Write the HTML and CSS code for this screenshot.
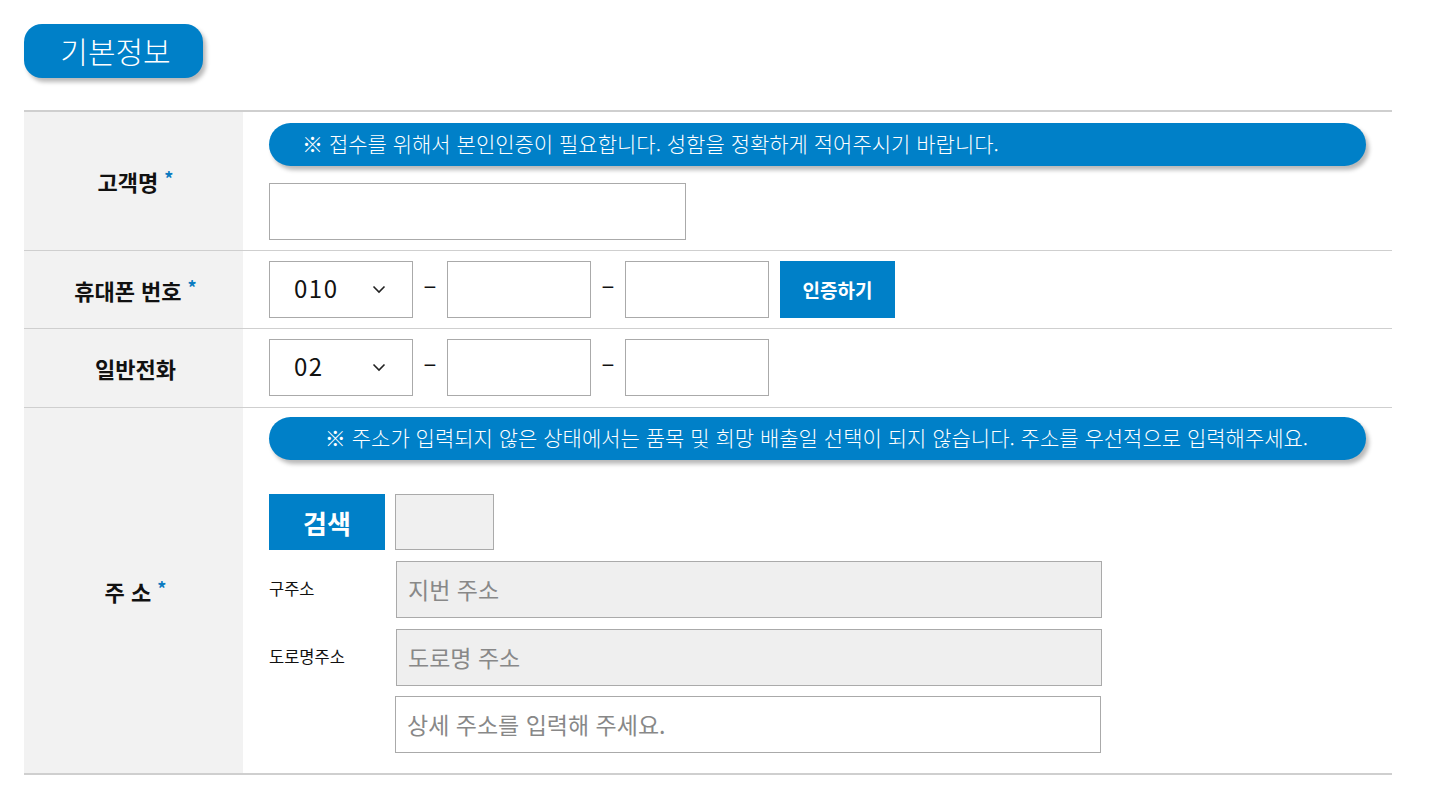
FILE: index.html
```html
<!DOCTYPE html>
<html lang="ko">
<head>
<meta charset="utf-8">
<title>기본정보</title>
<link rel="stylesheet" href="styles.css">
</head>
<body>
<div class="page">
  <h2 class="title">기본정보</h2>
  <div class="form">
    <div class="row row-name">
      <div class="label">고객명<span class="req">*</span></div>
      <div class="field">
        <div class="notice notice-left">※ 접수를 위해서 본인인증이 필요합니다. 성함을 정확하게 적어주시기 바랍니다.</div>
        <div class="input name-input"></div>
      </div>
    </div>
    <div class="row row-phone">
      <div class="label">휴대폰 번호<span class="req">*</span></div>
      <div class="field inline">
        <div class="select"><span>010</span><svg class="chev" width="14" height="9" viewBox="0 0 14 9"><path d="M1.5 1.5 L7 7 L12.5 1.5" fill="none" stroke="#222" stroke-width="1.6"/></svg></div>
        <span class="dash">–</span>
        <div class="input short"></div>
        <span class="dash">–</span>
        <div class="input short"></div>
        <button class="btn verify">인증하기</button>
      </div>
    </div>
    <div class="row row-phone row-tel">
      <div class="label">일반전화</div>
      <div class="field inline">
        <div class="select"><span>02</span><svg class="chev" width="14" height="9" viewBox="0 0 14 9"><path d="M1.5 1.5 L7 7 L12.5 1.5" fill="none" stroke="#222" stroke-width="1.6"/></svg></div>
        <span class="dash">–</span>
        <div class="input short"></div>
        <span class="dash">–</span>
        <div class="input short"></div>
      </div>
    </div>
    <div class="row row-addr">
      <div class="label">주 소<span class="req">*</span></div>
      <div class="field">
        <div class="notice notice-center">※ 주소가 입력되지 않은 상태에서는 품목 및 희망 배출일 선택이 되지 않습니다. 주소를 우선적으로 입력해주세요.</div>
        <div class="search-line">
          <button class="btn search">검색</button>
          <div class="zip"></div>
        </div>
        <div class="addr-line">
          <span class="addr-label">구주소</span>
          <div class="input addr gray">지번 주소</div>
        </div>
        <div class="addr-line">
          <span class="addr-label">도로명주소</span>
          <div class="input addr gray">도로명 주소</div>
        </div>
        <div class="addr-line detail">
          <span class="addr-label"></span>
          <div class="input addr">상세 주소를 입력해 주세요.</div>
        </div>
      </div>
    </div>
  </div>
</div>
</body>
</html>
```
FILE: styles.css
```css
* { box-sizing: border-box; }
html, body { margin: 0; padding: 0; background: #fff; }
body {
  font-family: "Noto Sans CJK KR", "Noto Sans", sans-serif;
  color: #111;
}
.page {
  padding: 24px 0 0 24px;
  width: 1392px;
}
.title {
  margin: 0;
  width: 179px;
  height: 54px;
  border-radius: 18px;
  background: #0080c8;
  color: #fff;
  font-size: 30px;
  font-weight: 300;
  line-height: 52px;
  text-align: center;
  padding-left: 4px;
  box-shadow: 3px 4px 4px rgba(0,0,0,0.28);
}
.form {
  margin-top: 32px;
  border-top: 2px solid #cfcfcf;
  border-bottom: 2px solid #cfcfcf;
}
.row {
  display: flex;
  border-top: 1px solid #cfcfcf;
}
.row:first-child { border-top: none; }
.label {
  width: 219px;
  flex: none;
  background: #f2f2f2;
  display: flex;
  align-items: center;
  justify-content: center;
  font-size: 22px;
  font-weight: 700;
  color: #111;
  white-space: pre;
  padding-left: 4px;
}
.req {
  color: #0a7bc1;
  font-size: 18px;
  margin-left: 6px;
  margin-top: -6px;
}
.field {
  flex: 1;
  padding: 0 26px;
  display: flex;
  flex-direction: column;
  align-items: flex-start;
}
.row-name .field { padding-top: 11px; padding-bottom: 10px; }
.notice {
  width: 1097px;
  height: 43px;
  background: #0080c8;
  color: #fff;
  font-size: 21px;
  font-weight: 300;
  line-height: 40px;
  border-radius: 22px;
  box-shadow: 3px 4px 4px rgba(0,0,0,0.28);
  white-space: nowrap;
}
.notice-left { padding-left: 33px; }
.notice-center { text-align: center; padding-right: 2px; }
.input {
  border: 1px solid #aaa;
  background: #fff;
  height: 57px;
}
.name-input { width: 417px; margin-top: 17px; }
.field.inline {
  flex-direction: row;
  align-items: center;
  padding-top: 10px;
  padding-bottom: 10px;
}
.row-tel .field.inline { padding-bottom: 11px; }
.select {
  width: 144px;
  height: 57px;
  border: 1px solid #aaa;
  display: flex;
  align-items: center;
  justify-content: space-between;
  padding: 0 26px 5px 24px;
  font-size: 24px;
  letter-spacing: 1.5px;
  color: #111;
}
.chev { margin-top: 4px; }
.dash {
  width: 34px;
  text-align: center;
  font-size: 24px;
  line-height: 1;
  margin-top: -11px;
  color: #111;
}
.input.short { width: 144px; }
.btn {
  border: none;
  background: #0080c8;
  color: #fff;
  font-family: inherit;
  font-weight: 700;
  cursor: pointer;
  padding: 0;
}
.verify {
  margin-left: 11px;
  width: 115px;
  height: 57px;
  font-size: 19px;
}
.row-addr .field { padding-top: 9px; padding-bottom: 20px; }
.search-line {
  display: flex;
  gap: 10px;
  margin-top: 34px;
}
.search {
  width: 116px;
  height: 56px;
  font-size: 26px;
}
.zip {
  width: 99px;
  height: 56px;
  border: 1px solid #aaa;
  background: #f0f0f0;
}
.addr-line {
  display: flex;
  align-items: center;
  margin-top: 11px;
}
.addr-line.detail { margin-top: 10px; }
.addr-label {
  width: 127px;
  font-size: 16.5px;
  color: #111;
  margin-top: -4px;
}
.input.addr {
  width: 706px;
  font-size: 23px;
  color: #888;
  padding-left: 11px;
  line-height: 55px;
}
.detail .addr-label { width: 126px; }
.input.gray { background: #efefef; }
```
